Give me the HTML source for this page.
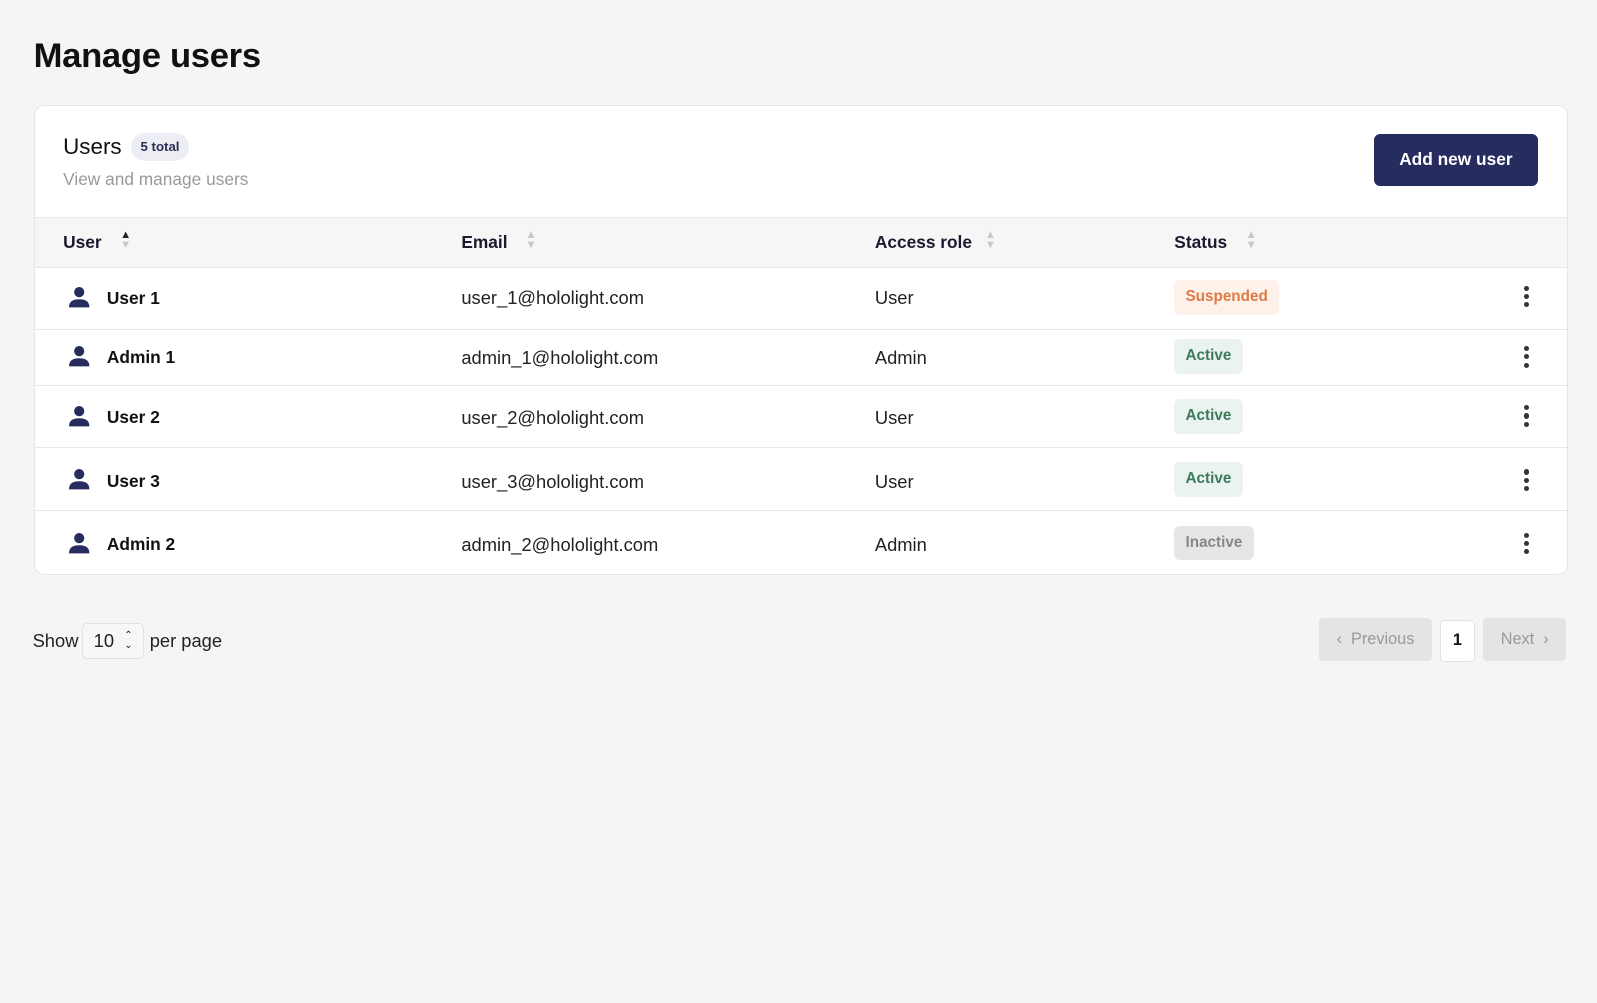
<!DOCTYPE html>
<html><head><style>
html,body{margin:0;padding:0;background:#f5f5f5;width:1597px;height:1003px;overflow:hidden}
#w{zoom:1.0185;position:relative;width:1568px;height:985px;font-family:"Liberation Sans",sans-serif;color:#111}
.a{position:absolute}
h1{position:absolute;left:33px;top:36px;margin:0;font-size:34px;font-weight:bold;letter-spacing:-0.3px}
.card{position:absolute;left:33px;top:103px;width:1505px;height:460px;background:#fff;border:1px solid #e6e6e6;border-radius:10px;overflow:hidden}
.th{position:absolute;left:0;top:109px;width:100%;height:48px;background:#f6f6f6;border-top:1px solid #e8e8e8;border-bottom:1px solid #e8e8e8}
.row{position:absolute;left:0;width:100%;border-bottom:1px solid #e8e8e8}
.hd{position:absolute;top:14px;font-weight:bold;font-size:17px;color:#1a1a2e}
.cell{position:absolute;font-size:18px;color:#222}
.b{font-weight:bold;color:#111;font-size:17px}
.badge{position:absolute;left:1119px;height:34px;line-height:34px;padding:0 11px;border-radius:6px;font-size:15px;font-weight:bold}
.dots{position:absolute;left:1462px;width:4px}
.dots i{display:block;width:5px;height:5px;border-radius:50%;background:#333;margin-bottom:3px}
.sort{position:absolute;top:12px;font-size:11px;line-height:10px;color:#c8c8c8}
</style></head><body><div id="w">
<h1>Manage users</h1>
<div class="card">
 <div class="a" style="left:28px;top:28px;font-size:22px;color:#111">Users</div>
 <div class="a" style="left:95px;top:27px;height:27px;line-height:27px;padding:0 9px;border-radius:14px;background:#eceef3;font-size:13px;font-weight:bold;color:#2a2f55">5 total</div>
 <div class="a" style="left:28px;top:62px;font-size:17px;color:#999">View and manage users</div>
 <div class="a" style="left:1315px;top:28px;width:161px;height:51px;line-height:51px;text-align:center;background:#262d5e;color:#fff;border-radius:6px;font-size:17px;font-weight:bold">Add new user</div>
 <div class="th">
  <div class="hd" style="left:28px">User</div><div class="sort" style="left:84px"><span style="color:#222">▲</span><br>▼</div>
  <div class="hd" style="left:419px">Email</div><div class="sort" style="left:482px">▲<br>▼</div>
  <div class="hd" style="left:825px">Access role</div><div class="sort" style="left:933px">▲<br>▼</div>
  <div class="hd" style="left:1119px">Status</div><div class="sort" style="left:1189px">▲<br>▼</div>
 </div>
 <div class="row" style="top:158px;height:61px"></div>
 <div class="row" style="top:219px;height:55px"></div>
 <div class="row" style="top:274px;height:61px"></div>
 <div class="row" style="top:336px;height:61px"></div>

 <svg class="a" style="left:33px;top:177px" width="22" height="22" viewBox="0 0 22 22"><circle cx="11" cy="6" r="5" fill="#262d5e"/><path d="M1 21c0-6 4-8 10-8s10 2 10 8z" fill="#262d5e"/></svg>
 <div class="cell b" style="left:71px;top:179px">User 1</div>
 <div class="cell" style="left:419px;top:178px">user_1@hololight.com</div>
 <div class="cell" style="left:825px;top:178px">User</div>
 <div class="badge" style="top:171px;background:#fdf1ea;color:#e07a45">Suspended</div>
 <div class="dots" style="top:177px"><i></i><i></i><i></i></div>

 <svg class="a" style="left:33px;top:235px" width="22" height="22" viewBox="0 0 22 22"><circle cx="11" cy="6" r="5" fill="#262d5e"/><path d="M1 21c0-6 4-8 10-8s10 2 10 8z" fill="#262d5e"/></svg>
 <div class="cell b" style="left:71px;top:237px">Admin 1</div>
 <div class="cell" style="left:419px;top:237px">admin_1@hololight.com</div>
 <div class="cell" style="left:825px;top:237px">Admin</div>
 <div class="badge" style="top:229px;background:#ebf3f0;color:#3d7a5c">Active</div>
 <div class="dots" style="top:236px"><i></i><i></i><i></i></div>

 <svg class="a" style="left:33px;top:294px" width="22" height="22" viewBox="0 0 22 22"><circle cx="11" cy="6" r="5" fill="#262d5e"/><path d="M1 21c0-6 4-8 10-8s10 2 10 8z" fill="#262d5e"/></svg>
 <div class="cell b" style="left:71px;top:296px">User 2</div>
 <div class="cell" style="left:419px;top:296px">user_2@hololight.com</div>
 <div class="cell" style="left:825px;top:296px">User</div>
 <div class="badge" style="top:288px;background:#ebf3f0;color:#3d7a5c">Active</div>
 <div class="dots" style="top:294px"><i></i><i></i><i></i></div>

 <svg class="a" style="left:33px;top:356px" width="22" height="22" viewBox="0 0 22 22"><circle cx="11" cy="6" r="5" fill="#262d5e"/><path d="M1 21c0-6 4-8 10-8s10 2 10 8z" fill="#262d5e"/></svg>
 <div class="cell b" style="left:71px;top:358px">User 3</div>
 <div class="cell" style="left:419px;top:358px">user_3@hololight.com</div>
 <div class="cell" style="left:825px;top:358px">User</div>
 <div class="badge" style="top:350px;background:#ebf3f0;color:#3d7a5c">Active</div>
 <div class="dots" style="top:357px"><i></i><i></i><i></i></div>

 <svg class="a" style="left:33px;top:418px" width="22" height="22" viewBox="0 0 22 22"><circle cx="11" cy="6" r="5" fill="#262d5e"/><path d="M1 21c0-6 4-8 10-8s10 2 10 8z" fill="#262d5e"/></svg>
 <div class="cell b" style="left:71px;top:420px">Admin 2</div>
 <div class="cell" style="left:419px;top:420px">admin_2@hololight.com</div>
 <div class="cell" style="left:825px;top:420px">Admin</div>
 <div class="badge" style="top:412px;background:#e6e6e6;color:#888">Inactive</div>
 <div class="dots" style="top:419px"><i></i><i></i><i></i></div>
</div>

<div class="a" style="left:32px;top:619px;font-size:18px;color:#222">Show</div>
<div class="a" style="left:81px;top:612px;width:58px;height:33px;border:1px solid #e2e2e2;border-radius:5px;background:#f7f7f7;font-size:18px;line-height:33px;color:#222"><span style="margin-left:10px">10</span><span style="position:absolute;left:40px;top:-1px;font-size:10px;line-height:9px;padding-top:8px">⌃<br>⌄</span></div>
<div class="a" style="left:147px;top:619px;font-size:18px;color:#222">per page</div>

<div class="a" style="left:1295px;top:607px;width:111px;height:42px;background:#e4e4e4;border-radius:4px;color:#999;font-size:16px;line-height:42px;text-align:center">‹&nbsp;&nbsp;Previous</div>
<div class="a" style="left:1414px;top:609px;width:32px;height:39px;background:#fff;border:1px solid #e2e2e2;border-radius:4px;font-size:16px;font-weight:bold;line-height:39px;text-align:center">1</div>
<div class="a" style="left:1456px;top:607px;width:82px;height:42px;background:#e4e4e4;border-radius:4px;color:#999;font-size:16px;line-height:42px;text-align:center">Next&nbsp;&nbsp;›</div>
</div></body></html>
